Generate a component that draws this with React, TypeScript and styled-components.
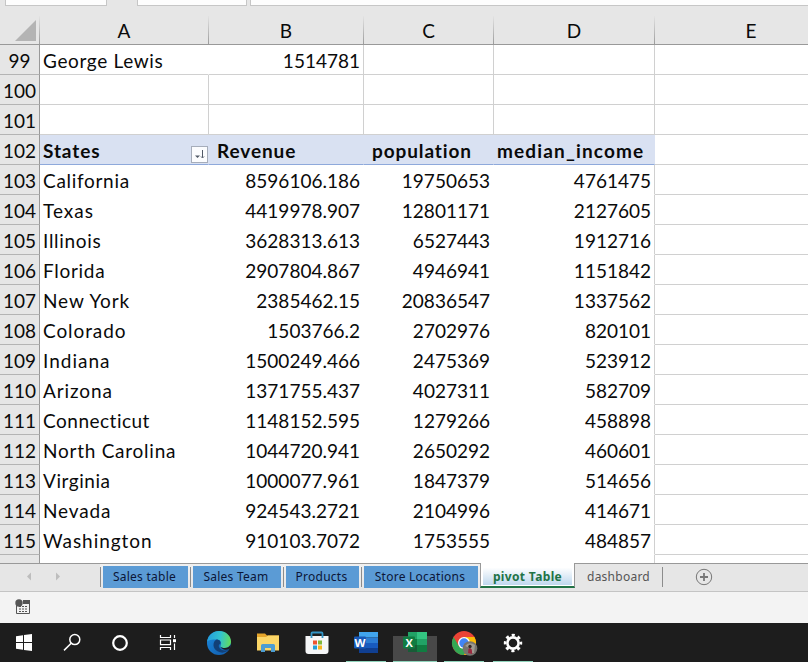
import React from "react";
import styled, { createGlobalStyle } from "styled-components";

const Global = createGlobalStyle`
  * { box-sizing: border-box; }
  body { margin: 0; background: #fff; overflow: hidden; }
`;

const COLUMNS = "40px 169px 155px 130px 161px 193px";

const Window = styled.div`
  width: 808px;
  height: 662px;
  display: flex;
  flex-direction: column;
  overflow: hidden;
  font-family: Lato, sans-serif;
  font-size: 19px;
  color: #0a0a0a;
  background: #fff;
`;

const FormulaStrip = styled.div`
  height: 16px;
  flex: none;
  display: flex;
  align-items: flex-start;
  background: #e6e6e6;
  padding-left: 5px;
`;

const FormulaBox = styled.div<{ $w: number; $gap: number }>`
  width: ${(p) => p.$w}px;
  height: 6px;
  flex: none;
  margin-right: ${(p) => p.$gap}px;
  background: #fdfdfd;
  border: 1px solid #c6c6c6;
  border-top: 0;
`;

const HeaderRow = styled.div`
  display: grid;
  grid-template-columns: ${COLUMNS};
  height: 29px;
  flex: none;
  background: #e6e6e6;
  border-bottom: 1px solid #999;
`;

const ColumnHeader = styled.div`
  display: flex;
  align-items: center;
  justify-content: center;
  padding-top: 1px;
  border-right: 1px solid;
  border-image: linear-gradient(#e6e6e6, #999) 1;
`;

const Corner = styled(ColumnHeader)`
  justify-content: flex-end;
  padding: 0 3px 0 0;
`;

const Grid = styled.div`
  height: 518px;
  flex: none;
  overflow: hidden;
`;

const Row = styled.div`
  display: grid;
  grid-template-columns: ${COLUMNS};
  height: 30px;
`;

const RowNumber = styled.div`
  display: flex;
  align-items: center;
  justify-content: center;
  background: #e6e6e6;
  border-right: 1px solid #999;
  border-bottom: 1px solid #b4b4b4;
  padding-top: 1px;
`;

type CellProps = { $right?: boolean; $line?: boolean; $side?: boolean; $head?: boolean; $pad?: number; $ls?: number };

const Cell = styled.div<CellProps>`
  display: flex;
  align-items: center;
  justify-content: ${(p) => (p.$right ? "flex-end" : "flex-start")};
  padding: 1px 3px 0 ${(p) => p.$pad ?? 3}px;
  white-space: nowrap;
  letter-spacing: ${(p) => p.$ls ?? 0}px;
  font-weight: ${(p) => (p.$head ? 700 : 400)};
  background: ${(p) => (p.$head ? "#d9e1f2" : "#fff")};
  border-bottom: 1px solid ${(p) => (p.$head ? "#8ea9db" : p.$line ? "#d0d0d0" : "transparent")};
  border-right: 1px solid ${(p) => (p.$side ? "#d0d0d0" : p.$head ? "#d9e1f2" : "transparent")};
`;

const SortButton = styled.div`
  width: 17px;
  height: 17px;
  flex: none;
  margin: 8px -3px 0 auto;
  background: #fbfcfe;
  border: 1px solid #a6adba;
  display: flex;
`;

const TabBar = styled.div`
  height: 29px;
  flex: none;
  display: flex;
  background: #e6e6e6;
  border-top: 1px solid #999;
  border-bottom: 1px solid #c4c4c4;
  font-family: "Noto Sans", sans-serif;
  font-size: 12px;
  letter-spacing: 0.25px;
`;

const TabArrows = styled.div`
  width: 100px;
  display: flex;
  flex: none;
`;

const ColoredTab = styled.div<{ $w: number }>`
  width: ${(p) => p.$w}px;
  height: 22px;
  margin: 2px 2px 0;
  padding: 0 2px 2px 0;
  flex: none;
  display: flex;
  align-items: center;
  justify-content: center;
  white-space: nowrap;
  color: #0b1637;
  background: #5b9bd5;
`;

const TabDivider = styled.div`
  width: 1px;
  height: 20px;
  margin-top: 3px;
  flex: none;
  background: #8c8c8c;
`;

const ColoredTabs = styled.div`
  display: flex;
  height: 27px;
  width: 380px;
  flex: none;
  background: linear-gradient(#f0f0f0, #e6e6e6);
`;

const ActiveTab = styled.div`
  width: 95px;
  height: 25px;
  margin-top: -1px;
  flex: none;
  display: flex;
  border: solid #999;
  border-width: 0 1px;
  border-bottom: 2px solid #217346;
  padding: 0 2px 1px;
  background: #fff;
`;

const ActiveLabel = styled.div`
  flex: 1;
  display: flex;
  align-items: center;
  justify-content: center;
  padding-top: 4px;
  white-space: nowrap;
  font-weight: 700;
  letter-spacing: 0.35px;
  color: #217346;
  background: linear-gradient(#fff 20%, #bfd8ee);
`;

const PlainTab = styled.div`
  width: 87px;
  flex: none;
  display: flex;
  align-items: center;
  justify-content: center;
  color: #555;
  padding-bottom: 2px;
`;

const AddSheet = styled.div`
  display: flex;
  margin-left: 32px;
  padding-top: 4px;
`;

const StatusBar = styled.div`
  height: 31px;
  flex: none;
  display: flex;
  align-items: flex-start;
  background: #f3f3f3;
  padding: 7px 0 0 15px;
`;

const Taskbar = styled.div`
  flex: 1;
  display: flex;
  background: #1d1d1d;
  border-bottom: 1px solid #0d0709;
`;

const TaskItem = styled.div<{ $w: number }>`
  width: ${(p) => p.$w}px;
  flex: none;
  height: 39px;
  display: flex;
  flex-direction: column;
  justify-content: flex-end;
  align-items: center;
  svg { display: block; flex: none; }
`;

const Underline = styled.div<{ $w: number }>`
  width: ${(p) => p.$w}px;
  height: 1px;
  background: #8fd3bb;
`;

const IconBox = styled.div<{ $active?: boolean }>`
  width: 44px;
  height: 38px;
  display: flex;
  justify-content: center;
  padding-top: 6px;
  background: ${(p) => (p.$active ? "linear-gradient(#1d1d1d 0 13px, #484848 13px)" : "none")};
`;

type StateRecord = [number, string, string, string, string, number];
const RECORDS: StateRecord[] = [
  [103, "California", "8596106.186", "19750653", "4761475", 0.7],
  [104, "Texas", "4419978.907", "12801171", "2127605", 1],
  [105, "Illinois", "3628313.613", "6527443", "1912716", 0.7],
  [106, "Florida", "2907804.867", "4946941", "1151842", 0.7],
  [107, "New York", "2385462.15", "20836547", "1337562", 0.9],
  [108, "Colorado", "1503766.2", "2702976", "820101", 0.9],
  [109, "Indiana", "1500249.466", "2475369", "523912", 1],
  [110, "Arizona", "1371755.437", "4027311", "582709", 0.9],
  [111, "Connecticut", "1148152.595", "1279266", "458898", 0.5],
  [112, "North Carolina", "1044720.941", "2650292", "460601", 0.75],
  [113, "Virginia", "1000077.961", "1847379", "514656", 0.55],
  [114, "Nevada", "924543.2721", "2104996", "414671", 0.85],
  [115, "Washington", "910103.7072", "1753555", "484857", 0.95],
];

const Windows = () => (
  <svg width="28" height="28" viewBox="0 0 28 28" fill="#fff">
    <path d="M6 7.200l7-1v6.900H6zM14 6l8-1.100v8.200h-8zM6 14.100h7v6.700l-7-1zM14 14.100h8v7.900L14 20.900z" />
  </svg>
);
const Search = () => (
  <svg width="28" height="28" viewBox="0 0 28 28" fill="none" stroke="#fff" strokeWidth="1.5">
    <circle cx="16.8" cy="10.600" r="5" />
    <path d="M13.2 14.300L6 21.400" />
  </svg>
);
const Cortana = () => (
  <svg width="28" height="28" viewBox="0 0 28 28" fill="none" stroke="#fff" strokeWidth="2.200">
    <circle cx="14" cy="14" r="6.8" />
  </svg>
);
const TaskView = () => (
  <svg width="28" height="28" viewBox="0 0 28 28" fill="none" stroke="#fff" strokeWidth="1.2">
    <path d="M6.5 6v2.500h10V6M6.5 21v-2.500h10V21M6.5 11h10v4.700h-10zM20.500 6v3M20.500 14.500V21" />
    <path d="M19 10.200h3v3h-3z" fill="#fff" stroke="none" />
  </svg>
);
const Edge = () => (
  <svg width="28" height="28" viewBox="0 0 28 28">
    <defs>
      <linearGradient id="edgeTop" x1="0" y1=".4" x2="1" y2=".5">
        <stop offset="0" stopColor="#249ddf" /><stop offset=".55" stopColor="#32c3ce" /><stop offset="1" stopColor="#62dc5b" />
      </linearGradient>
      <linearGradient id="edgeLow" x1="0" y1="0" x2="1" y2="1">
        <stop offset="0" stopColor="#1b8be0" /><stop offset="1" stopColor="#1158a8" />
      </linearGradient>
    </defs>
    <circle cx="14" cy="14" r="12" fill="url(#edgeLow)" />
    <path d="M2 13C3 6 8 2 14 2c7 0 12 5 12 10.500c0 4-3 6.500-6.500 6.500c-3 0-5-1-4-2.500c1.800-3-.3-6-4-6C7 10.500 3 11 2 13z" fill="url(#edgeTop)" />
    <path d="M11.500 10.600c-4 2-4.500 9 1.500 12c4 2 8 1 11-2c-4 1.700-8 1-9.500-1.500c-1.400-2.200-.8-3.200.8-4.300c.8-2-.8-4.300-3.800-4.200z" fill="#124078" />
    <path d="M15.500 16.200c-.8 1.800 1.500 2.900 4 2.800c3 0 5-1.300 6.200-3.300c0 1.700-.4 3-1.200 4.300c-3.500 1.600-9.500.4-9-3.800z" fill="#1d1d1d" />
  </svg>
);
const Folder = () => (
  <svg width="28" height="28" viewBox="0 0 28 28">
    <path d="M3 4.500h8l2 2h12v4H3z" fill="#e5a52b" />
    <path d="M3 8h9l2-1.500h11V21.500H3z" fill="#fbd667" />
    <path d="M7 23v-6.500q0-1.500 1.500-1.500h11q1.500 0 1.500 1.500V23h-4v-4h-6v4z" fill="#4d9dd2" />
  </svg>
);
const Store = () => (
  <svg width="28" height="28" viewBox="0 0 28 28">
    <path d="M2.500 7h23v15q0 3-3 3h-17q-3 0-3-3z" fill="#f5f6f7" />
    <path d="M8.500 9V4.500Q8.500 3.500 9.500 3.500h9Q19.500 3.500 19.500 4.500V9" fill="none" stroke="#3295c6" strokeWidth="1.800" />
    <path d="M10 11.500h4v4h-4z" fill="#ee5430" /><path d="M15 11.500h4v4h-4z" fill="#80b83b" />
    <path d="M10 16.500h4v4h-4z" fill="#229fd8" /><path d="M15 16.500h4v4h-4z" fill="#f6b51f" />
  </svg>
);

const AppLetter = styled.text`
  font: 700 11px "Open Sans", sans-serif;
  fill: #fff;
`;

const Word = () => (
  <svg width="28" height="28" viewBox="0 0 28 28">
    <path d="M7 3h19v5.500H7z" fill="#41a5ee" /><path d="M7 8.500h19V14H7z" fill="#2b7cd3" />
    <path d="M7 14h19v5H7z" fill="#185abd" /><path d="M7 19h19v5H7z" fill="#103f91" />
    <rect x="2" y="7.500" width="12" height="12" rx="1" fill="#1859b8" />
    <AppLetter x="2.500" y="17.500" textLength="11" lengthAdjust="spacingAndGlyphs">W</AppLetter>
  </svg>
);
const Excel = () => (
  <svg width="28" height="28" viewBox="0 0 28 28">
    <path d="M7 3h10v7H7z" fill="#21a366" /><path d="M16 3h10v7H16z" fill="#33c481" />
    <path d="M7 10h10v6H7z" fill="#107c41" /><path d="M16 10h10v6H16z" fill="#21a366" />
    <path d="M7 16h19v7H7z" fill="#185c37" /><path d="M16 16h10v7H16z" fill="#107c41" />
    <rect x="2" y="7.500" width="12" height="12" rx="1" fill="#107c41" />
    <AppLetter x="4.500" y="17.500">X</AppLetter>
  </svg>
);
const Chrome = () => (
  <svg width="28" height="28" viewBox="0 0 28 28">
    <circle cx="14" cy="14" r="12" fill="#ea4335" />
    <path d="M3.600 8A12 12 0 0 0 14 26L19.200 17L14 14L8.800 17z" fill="#34a853" />
    <path d="M24.400 8A12 12 0 0 1 14 26L19.200 17L14 8z" fill="#fbbc05" />
    <circle cx="14" cy="14" r="6" fill="#fff" /><circle cx="14" cy="14" r="4.700" fill="#4285f4" />
    <circle cx="20" cy="19.500" r="7.300" fill="#77736e" />
    <path d="M15 17q4-5 10-1l-1 8h-3l-1-5z" fill="#a09b91" />
    <path d="M18 24l.5-4 1.500-1 1.800 1.500.4 4.500z" fill="#9a293e" />
    <circle cx="20" cy="17.500" r="1.700" fill="#382a29" />
  </svg>
);
const Gear = () => (
  <svg width="28" height="28" viewBox="0 0 28 28" fill="none" stroke="#fff">
    <circle cx="14" cy="14" r="5.600" strokeWidth="2.600" />
    <circle cx="14" cy="14" r="7.900" strokeWidth="2.600" strokeDasharray="3.100 3.104" strokeDashoffset="1.550" />
  </svg>
);

const TASKS: { w: number; icon: React.ReactNode; line?: number; active?: boolean }[] = [
  { w: 48, icon: <Windows /> },
  { w: 48, icon: <Search /> },
  { w: 48, icon: <Cortana /> },
  { w: 48, icon: <TaskView /> },
  { w: 54, icon: <Edge /> },
  { w: 43, icon: <Folder /> },
  { w: 55, icon: <Store /> },
  { w: 44, icon: <Word />, line: 40 },
  { w: 54, icon: <Excel />, line: 44, active: true },
  { w: 44, icon: <Chrome />, line: 40 },
  { w: 54, icon: <Gear />, line: 40 },
];

export default function App() {
  return (
    <Window>
      <Global />
      <FormulaStrip>
        <FormulaBox $w={102} $gap={30} />
        <FormulaBox $w={110} $gap={3} />
        <FormulaBox $w={570} $gap={0} />
      </FormulaStrip>
      <HeaderRow>
        <Corner>
          <svg width="21" height="21" viewBox="0 0 21 21"><path d="M21 0v21H0z" fill="#b4b4b4" /></svg>
        </Corner>
        {["A", "B", "C", "D", "E"].map((name) => <ColumnHeader key={name}>{name}</ColumnHeader>)}
      </HeaderRow>
      <Grid>
        <Row>
          <RowNumber>99</RowNumber>
          <Cell $line $ls={0.65}>George Lewis</Cell>
          <Cell $line $side $right>1514781</Cell>
          <Cell $line $side /><Cell $line $side /><Cell $line />
        </Row>
        {[100, 101].map((n) => (
          <Row key={n}>
            <RowNumber>{n}</RowNumber>
            <Cell $line $side /><Cell $line $side /><Cell $line $side /><Cell $line $side /><Cell $line />
          </Row>
        ))}
        <Row>
          <RowNumber>102</RowNumber>
          <Cell $head $ls={0.9}>
            States
            <SortButton>
              <svg width="15" height="15" viewBox="0 0 15 15" fill="none" stroke="#505866">
                <path d="M10.500 3v7.500M9 9.500l1.500 1.500 1.500-1.500" /><path d="M3 8.500h5L5.500 11z" fill="#505866" stroke="none" />
              </svg>
            </SortButton>
          </Cell>
          <Cell $head $pad={8} $ls={0.9}>Revenue</Cell>
          <Cell $head $pad={8} $ls={0.9}>population</Cell>
          <Cell $head $ls={1.15}>median_income</Cell>
          <Cell $line />
        </Row>
        {RECORDS.map(([n, state, revenue, population, income, tracking]) => (
          <Row key={n}>
            <RowNumber>{n}</RowNumber>
            <Cell $ls={tracking}>{state}</Cell>
            <Cell $right>{revenue}</Cell>
            <Cell $right>{population}</Cell>
            <Cell $right $side>{income}</Cell>
            <Cell $line />
          </Row>
        ))}
        <Row>
          <RowNumber /><Cell /><Cell /><Cell /><Cell $side /><Cell />
        </Row>
      </Grid>
      <TabBar>
        <TabArrows>
          <svg width="100" height="27" viewBox="0 0 100 27" fill="#bdbdbd"><path d="M31 8.500v8l-4-4zM56 8.500v8l4-4z" /></svg>
        </TabArrows>
        <ColoredTabs>
          <TabDivider />
          <ColoredTab $w={85}>Sales table</ColoredTab>
          <TabDivider />
          <ColoredTab $w={88}>Sales Team</ColoredTab>
          <TabDivider />
          <ColoredTab $w={73}>Products</ColoredTab>
          <TabDivider />
          <ColoredTab $w={114}>Store Locations</ColoredTab>
        </ColoredTabs>
        <ActiveTab><ActiveLabel>pivot Table</ActiveLabel></ActiveTab>
        <PlainTab>dashboard</PlainTab>
        <TabDivider />
        <AddSheet>
          <svg width="18" height="18" viewBox="0 0 18 18" fill="none" stroke="#777">
            <circle cx="9" cy="9" r="7.700" /><path d="M9 5v8M5 9h8" strokeWidth="1.800" />
          </svg>
        </AddSheet>
      </TabBar>
      <StatusBar>
        <svg width="16" height="16" viewBox="0 0 16 16" fill="none" stroke="#555">
          <path d="M1.500 6v8.500h13V1.500H8M8 3.500h6" /><path d="M8 1h7v4H8z" fill="#555" stroke="none" />
          <circle cx="4" cy="4" r="3.700" fill="#555" stroke="none" />
          <path d="M4 7.500h9M4 10h9M4 12.500h9" strokeDasharray="2 1" />
        </svg>
      </StatusBar>
      <Taskbar>
        {TASKS.map((t, i) => (
          <TaskItem key={i} $w={t.w}>
            <IconBox $active={t.active}>{t.icon}</IconBox>
            <Underline $w={t.line ?? 0} />
          </TaskItem>
        ))}
      </Taskbar>
    </Window>
  );
}
